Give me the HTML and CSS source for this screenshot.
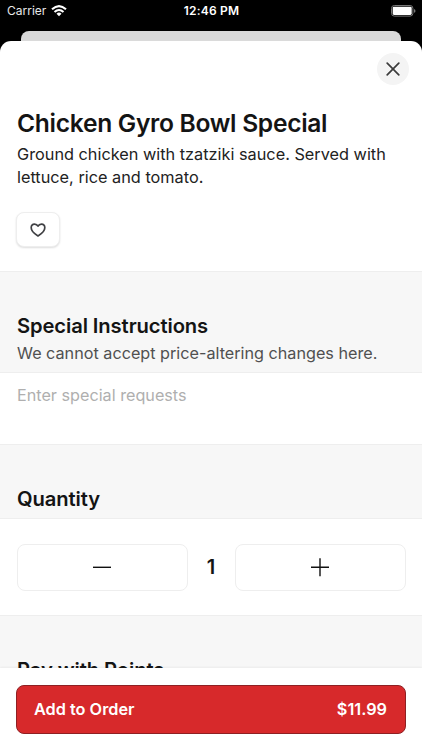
FILE: index.html
```html
<!DOCTYPE html>
<html lang="en">
<head>
<meta charset="utf-8">
<meta name="viewport" content="width=device-width, initial-scale=1">
<title>Chicken Gyro Bowl Special</title>
<link rel="stylesheet" href="styles.css">
</head>
<body>
<div class="screen">
  <header class="status">
    <div class="carrier"><span>Carrier</span>
      <svg width="16" height="12" viewBox="0 0 16 12" fill="none" stroke="#fff" stroke-width="2.1"><path d="M1 4.3Q8-2.1 15 4.3M3.5 7Q8 3 12.5 7"/><path d="M5.5 8.7Q8 6.5 10.5 8.7L8 11.2Z" fill="#fff" stroke="none"/></svg>
    </div>
    <div class="time">12:46 PM</div>
    <svg class="battery" width="25" height="12" viewBox="0 0 25 12"><rect x=".5" y=".5" width="21.4" height="10.6" rx="2.8" fill="none" stroke="#777"/><rect x="1.7" y="1.7" width="19" height="8.2" rx="1.3" fill="#fff"/><path d="M23 4v3.8Q24.5 7.2 24.5 5.9T23 4Z" fill="#777"/></svg>
  </header>
  <div class="back-card"></div>
  <main class="sheet">
    <section class="hero">
      <button class="close" aria-label="Close"><svg width="14" height="14" viewBox="0 0 14 14" fill="none" stroke="#3c3c3c" stroke-width="1.7" stroke-linecap="round"><path d="M1.2 1.2l11.6 11.6M12.8 1.2L1.2 12.8"/></svg></button>
      <h1><span>Chicken Gyro Bowl Special</span></h1>
      <p class="description">Ground chicken with tzatziki sauce. Served with<br>lettuce, rice and tomato.</p>
      <button class="favorite" aria-label="Favorite"><svg width="16" height="14" viewBox="0 0 16 14" fill="none" stroke="#404144" stroke-width="1.7" stroke-linejoin="round"><path d="M8 13C6.2 11.9 1.2 8.7 1.2 4.8C1.2 2.5 2.7 1.1 4.6 1.1C6.1 1.1 7.3 1.9 8 3.2C8.7 1.9 9.9 1.1 11.4 1.1C13.3 1.1 14.8 2.5 14.8 4.8C14.8 8.7 9.8 11.9 8 13Z"/></svg></button>
    </section>
    <section class="heading instructions"><h2><span>Special Instructions</span></h2><p class="note">We cannot accept price-altering changes here.</p></section>
    <div class="field"><span class="placeholder">Enter special requests</span></div>
    <section class="heading quantity"><h2>Quantity</h2></section>
    <div class="stepper">
      <button aria-label="Decrease"><svg width="20" height="20" viewBox="0 0 20 20" stroke="#111" stroke-width="1.4"><path d="M1 10.3h18"/></svg></button>
      <span class="count">1</span>
      <button aria-label="Increase"><svg width="20" height="20" viewBox="0 0 20 20" stroke="#111" stroke-width="1.4"><path d="M1 10.3h18M10 1.3v18"/></svg></button>
    </div>
    <section class="heading points"><h2>Pay with Points</h2></section>
  </main>
  <footer class="footer"><button class="order"><span class="label">Add to Order</span><span class="price">$11.99</span></button></footer>
</div>
</body>
</html>
```
FILE: styles.css
```css
* { box-sizing: border-box; }
body { margin: 0; background: #000; font-family: Inter, sans-serif; color: #141414; }
h1, h2, p { margin: 0; white-space: nowrap; }
button { padding: 0; font: inherit; }
svg { display: block; }
.screen { width: 422px; height: 750px; display: flex; flex-direction: column; overflow: hidden; }
.status { height: 31px; padding: 0 6px 10px 7px; display: grid; grid-template-columns: 1fr auto 1fr; align-items: center; color: #fff; flex: none; }
.carrier { display: flex; align-items: center; gap: 4px; font-size: 12px; letter-spacing: 0; color: #e8e8e8; }
.carrier span { width: 40px; }
.time { font-size: 12px; font-weight: 600; letter-spacing: .2px; }
.battery { justify-self: end; }
.back-card { height: 10px; margin: 0 21px; background: #dadada; border-radius: 8px 8px 0 0; flex: none; }
.sheet { flex: 1; min-height: 0; overflow: hidden; background: #fff; border-radius: 11px 11px 0 0; }
.hero { height: 230px; padding: 12px 13px 0 16px; display: flex; flex-direction: column; }
.close { width: 32px; height: 32px; border: 0; border-radius: 50%; background: #f4f4f4; display: grid; place-items: center; align-self: flex-end; flex: none; }
h1 { margin: 22px 0 0 1px; font-size: 24.6px; line-height: 32px; font-weight: 600; letter-spacing: -.3px; }
.description { margin: 4px 0 0 1px; font-size: 16.3px; line-height: 22.5px; letter-spacing: 0; color: #222; }
.favorite { width: 44px; height: 35px; margin-top: 24px; border: 1px solid #eee; border-radius: 8px; background: #fff; box-shadow: 0 1px 2px #0002; display: grid; place-items: center; flex: none; }
.heading { background: #f7f7f7; border-top: 1px solid #eee; border-bottom: 1px solid #eee; padding-left: 17px; }
h2 { font-size: 20.2px; line-height: 28px; font-weight: 600; letter-spacing: -.1px; }
.instructions { height: 102px; padding-top: 40px; }
.note { font-size: 16.2px; line-height: 24px; margin-top: 1px; color: #505050; }
.field { height: 71px; padding: 11px 17px; font-size: 16.2px; line-height: 23px; color: #afafaf; }
.quantity { height: 75px; padding-top: 40px; }
.stepper { height: 96px; padding: 0 16.5px; display: grid; grid-template-columns: 171px 1fr 171px; align-items: center; }
.stepper button { height: 47px; border: 1px solid #eee; border-radius: 8px; background: #fff; display: grid; place-items: center; }
.count { text-align: center; font-size: 20px; font-weight: 600; }
.points { height: 75px; padding-top: 40px; }
.footer { height: 82px; padding: 16.5px 16px; background: #fff; box-shadow: 0 -1px 2px #0000000d; flex: none; z-index: 1; }
.order { width: 390px; height: 49px; padding: 0 18px 0 17px; border: 1px solid #8e2023; border-radius: 8px; background: #d7292b; color: #fff; display: flex; align-items: center; justify-content: space-between; font-size: 16.3px; font-weight: 600; }
```
